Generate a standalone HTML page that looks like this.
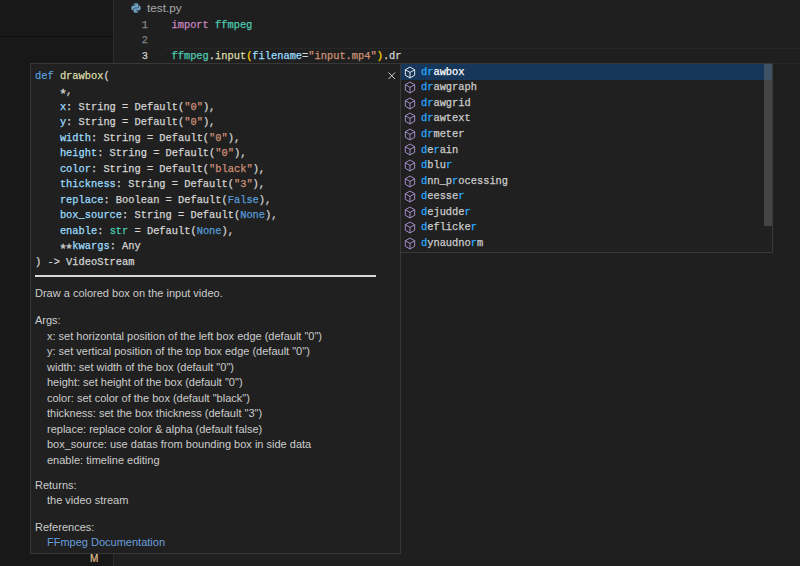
<!DOCTYPE html>
<html><head><meta charset="utf-8">
<style>
html,body{margin:0;padding:0;}
body{width:800px;height:566px;overflow:hidden;background:#1f1f1f;position:relative;font-family:"Liberation Sans",sans-serif;}
.abs{position:absolute;}
.ast{font-style:normal;display:inline-block;transform:translateY(3.3px) scale(1.3);}
.mono{font-family:"Liberation Mono",monospace;font-size:10.37px;line-height:15.4px;white-space:pre;-webkit-text-stroke:0.25px currentColor;}
.sans{font-family:"Liberation Sans",sans-serif;font-size:11px;line-height:15.5px;white-space:pre;color:#cccccc;}
#side{left:0;top:0;width:113px;height:566px;background:#181818;}
#sideline{left:0;top:36px;width:113px;height:1px;background:#0f0f0f;}
#sideborder{left:113px;top:0;width:1px;height:566px;background:#2b2b2b;}
.ln{left:114px;width:34px;text-align:right;color:#858585;}
.code{left:171.5px;color:#d4d4d4;}
.kw{color:#c586c0}.mod{color:#4ec9b0}.fn{color:#dcdcaa}.br{color:#ffd700}.par{color:#9cdcfe}.str{color:#ce9178}.blue{color:#569cd6}.op{color:#d4d4d4}
#curline{left:165px;top:48px;width:635px;height:14px;border-top:1px solid #272727;border-bottom:1px solid #272727;}
#hover{left:30px;top:63px;width:369px;height:489px;background:#202020;border:1px solid #383838;}
#suggest{left:400px;top:63px;width:371px;height:188px;background:#202020;border:1px solid #383838;}
.srow{position:absolute;left:0;width:371px;height:15.6px;}
.srow .lbl{position:absolute;left:20px;top:0.7px;color:#cccccc;-webkit-text-stroke:0.25px currentColor;font-family:"Liberation Mono",monospace;font-size:10.37px;line-height:15.5px;white-space:pre;}
.srow .lbl b{font-weight:normal;color:#2aaaff;}
.srow svg{position:absolute;left:2.8px;top:1.6px;}
.sel{background:#16375a;}
.sel .lbl{color:#ffffff;}
</style></head><body>
<div id="side" class="abs"></div>
<div id="sideline" class="abs"></div>
<div id="sideborder" class="abs"></div>

<!-- breadcrumb -->
<svg class="abs" style="left:131px;top:2.5px" width="10" height="10" viewBox="0 0 16 16">
<path fill="#6ea3c6" d="M7.9 0.5C4.2 0.5 4.4 2.1 4.4 2.1v1.7h3.6v0.5H3C3 4.3 0.6 4 0.6 7.9s2.1 3.7 2.1 3.7h1.3V9.8s-0.1-2.1 2.1-2.1h3.6s2 0 2-2V2.5S12 0.5 7.9 0.5zM5.9 1.7c0.4 0 0.6 0.3 0.6 0.6s-0.3 0.6-0.6 0.6-0.6-0.3-0.6-0.6 0.3-0.6 0.6-0.6z"/>
<path fill="#6ea3c6" d="M8.1 15.5c3.7 0 3.5-1.6 3.5-1.6v-1.7H8v-0.5h5c0 0 2.4 0.3 2.4-3.6s-2.1-3.7-2.1-3.7h-1.3v1.8s0.1 2.1-2.1 2.1H6.3s-2 0-2 2v3.2S4 15.5 8.1 15.5zM10.1 14.3c-0.4 0-0.6-0.3-0.6-0.6s0.3-0.6 0.6-0.6 0.6 0.3 0.6 0.6-0.3 0.6-0.6 0.6z"/>
</svg>
<div class="abs sans" style="left:147px;top:0.5px;font-size:11.8px;line-height:15px;color:#a9a9a9">test.py</div>

<!-- line numbers -->
<div class="abs mono ln" style="top:17.7px;line-height:15.6px">1</div>
<div class="abs mono ln" style="top:33.3px;line-height:15.6px">2</div>
<div class="abs mono ln" style="top:48.9px;line-height:15.6px;color:#cccccc">3</div>
<div id="curline" class="abs"></div>
<div class="abs mono code" style="top:17.7px;line-height:15.6px"><span class="kw">import</span> <span class="mod">ffmpeg</span></div>
<div class="abs mono code" style="top:48.9px;line-height:15.6px"><span class="mod">ffmpeg</span>.<span class="fn">input</span><span class="br">(</span><span class="par">filename</span>=<span class="str">"input.mp4"</span><span class="br">)</span>.dr</div>

<!-- hover -->
<div id="hover" class="abs"></div>
<svg class="abs" style="left:387.5px;top:71.7px" width="8" height="8" viewBox="0 0 8 8"><path d="M0.5 0.5L7.0 7.0M7.0 0.5L0.5 7.0" stroke="#d0d0d0" stroke-width="1"/></svg>
<div class="abs mono" style="left:35px;top:68.8px;line-height:15.5px;color:#d4d4d4"><span class="blue">def</span> <span class="fn">drawbox</span>(
    <i class="ast">*</i>,
    <span class="par">x</span>: String = Default(<span class="str">"0"</span>),
    <span class="par">y</span>: String = Default(<span class="str">"0"</span>),
    <span class="par">width</span>: String = Default(<span class="str">"0"</span>),
    <span class="par">height</span>: String = Default(<span class="str">"0"</span>),
    <span class="par">color</span>: String = Default(<span class="str">"black"</span>),
    <span class="par">thickness</span>: String = Default(<span class="str">"3"</span>),
    <span class="par">replace</span>: Boolean = Default(<span class="blue">False</span>),
    <span class="par">box_source</span>: String = Default(<span class="blue">None</span>),
    <span class="par">enable</span>: <span class="mod">str</span> = Default(<span class="blue">None</span>),
    <i class="ast">*</i><i class="ast">*</i><span class="par">kwargs</span>: Any
) -&gt; VideoStream</div>
<div class="abs" style="left:35px;top:275px;width:341px;height:1.7px;background:#d8d8d8"></div>

<div class="abs sans" style="left:35px;top:286.4px">Draw a colored box on the input video.</div>
<div class="abs sans" style="left:35px;top:313.2px">Args:</div>
<div class="abs sans" style="left:47px;top:328.5px">x: set horizontal position of the left box edge (default "0")
y: set vertical position of the top box edge (default "0")
width: set width of the box (default "0")
height: set height of the box (default "0")
color: set color of the box (default "black")
thickness: set the box thickness (default "3")
replace: replace color &amp; alpha (default false)
box_source: use datas from bounding box in side data
enable: timeline editing</div>
<div class="abs sans" style="left:35px;top:477.7px">Returns:</div>
<div class="abs sans" style="left:47px;top:493.3px">the video stream</div>
<div class="abs sans" style="left:35px;top:519.7px">References:</div>
<div class="abs sans" style="left:47px;top:535.3px;color:#6a9fdc">FFmpeg Documentation</div>

<div class="abs" style="left:90px;top:551.5px;font-size:10px;line-height:14px;color:#e2c08d;font-family:'Liberation Sans',sans-serif;-webkit-text-stroke:0.2px #e2c08d">M</div>

<!-- suggest -->
<div id="suggest" class="abs">
<!--ROWS--><div class="srow sel" style="top:0.00px"><svg width="12" height="13" viewBox="0 0 16 17"><path d="M8 1.2L14.2 4.8V12.2L8 15.8L1.8 12.2V4.8Z M1.8 4.8L8 8.4L14.2 4.8 M8 8.4V15.8" fill="none" stroke="#ffffff" stroke-width="1.15" stroke-linejoin="round"/></svg><span class="lbl"><b>d</b><b>r</b>awbox</span></div>
<div class="srow" style="top:15.58px"><svg width="12" height="13" viewBox="0 0 16 17"><path d="M8 1.2L14.2 4.8V12.2L8 15.8L1.8 12.2V4.8Z M1.8 4.8L8 8.4L14.2 4.8 M8 8.4V15.8" fill="none" stroke="#b39ddf" stroke-width="1.15" stroke-linejoin="round"/></svg><span class="lbl"><b>d</b><b>r</b>awgraph</span></div>
<div class="srow" style="top:31.16px"><svg width="12" height="13" viewBox="0 0 16 17"><path d="M8 1.2L14.2 4.8V12.2L8 15.8L1.8 12.2V4.8Z M1.8 4.8L8 8.4L14.2 4.8 M8 8.4V15.8" fill="none" stroke="#b39ddf" stroke-width="1.15" stroke-linejoin="round"/></svg><span class="lbl"><b>d</b><b>r</b>awgrid</span></div>
<div class="srow" style="top:46.74px"><svg width="12" height="13" viewBox="0 0 16 17"><path d="M8 1.2L14.2 4.8V12.2L8 15.8L1.8 12.2V4.8Z M1.8 4.8L8 8.4L14.2 4.8 M8 8.4V15.8" fill="none" stroke="#b39ddf" stroke-width="1.15" stroke-linejoin="round"/></svg><span class="lbl"><b>d</b><b>r</b>awtext</span></div>
<div class="srow" style="top:62.32px"><svg width="12" height="13" viewBox="0 0 16 17"><path d="M8 1.2L14.2 4.8V12.2L8 15.8L1.8 12.2V4.8Z M1.8 4.8L8 8.4L14.2 4.8 M8 8.4V15.8" fill="none" stroke="#b39ddf" stroke-width="1.15" stroke-linejoin="round"/></svg><span class="lbl"><b>d</b><b>r</b>meter</span></div>
<div class="srow" style="top:77.90px"><svg width="12" height="13" viewBox="0 0 16 17"><path d="M8 1.2L14.2 4.8V12.2L8 15.8L1.8 12.2V4.8Z M1.8 4.8L8 8.4L14.2 4.8 M8 8.4V15.8" fill="none" stroke="#b39ddf" stroke-width="1.15" stroke-linejoin="round"/></svg><span class="lbl"><b>d</b>e<b>r</b>ain</span></div>
<div class="srow" style="top:93.48px"><svg width="12" height="13" viewBox="0 0 16 17"><path d="M8 1.2L14.2 4.8V12.2L8 15.8L1.8 12.2V4.8Z M1.8 4.8L8 8.4L14.2 4.8 M8 8.4V15.8" fill="none" stroke="#b39ddf" stroke-width="1.15" stroke-linejoin="round"/></svg><span class="lbl"><b>d</b>blu<b>r</b></span></div>
<div class="srow" style="top:109.06px"><svg width="12" height="13" viewBox="0 0 16 17"><path d="M8 1.2L14.2 4.8V12.2L8 15.8L1.8 12.2V4.8Z M1.8 4.8L8 8.4L14.2 4.8 M8 8.4V15.8" fill="none" stroke="#b39ddf" stroke-width="1.15" stroke-linejoin="round"/></svg><span class="lbl"><b>d</b>nn_p<b>r</b>ocessing</span></div>
<div class="srow" style="top:124.64px"><svg width="12" height="13" viewBox="0 0 16 17"><path d="M8 1.2L14.2 4.8V12.2L8 15.8L1.8 12.2V4.8Z M1.8 4.8L8 8.4L14.2 4.8 M8 8.4V15.8" fill="none" stroke="#b39ddf" stroke-width="1.15" stroke-linejoin="round"/></svg><span class="lbl"><b>d</b>eesse<b>r</b></span></div>
<div class="srow" style="top:140.22px"><svg width="12" height="13" viewBox="0 0 16 17"><path d="M8 1.2L14.2 4.8V12.2L8 15.8L1.8 12.2V4.8Z M1.8 4.8L8 8.4L14.2 4.8 M8 8.4V15.8" fill="none" stroke="#b39ddf" stroke-width="1.15" stroke-linejoin="round"/></svg><span class="lbl"><b>d</b>ejudde<b>r</b></span></div>
<div class="srow" style="top:155.80px"><svg width="12" height="13" viewBox="0 0 16 17"><path d="M8 1.2L14.2 4.8V12.2L8 15.8L1.8 12.2V4.8Z M1.8 4.8L8 8.4L14.2 4.8 M8 8.4V15.8" fill="none" stroke="#b39ddf" stroke-width="1.15" stroke-linejoin="round"/></svg><span class="lbl"><b>d</b>eflicke<b>r</b></span></div>
<div class="srow" style="top:171.38px"><svg width="12" height="13" viewBox="0 0 16 17"><path d="M8 1.2L14.2 4.8V12.2L8 15.8L1.8 12.2V4.8Z M1.8 4.8L8 8.4L14.2 4.8 M8 8.4V15.8" fill="none" stroke="#b39ddf" stroke-width="1.15" stroke-linejoin="round"/></svg><span class="lbl"><b>d</b>ynaudno<b>r</b>m</span></div><!--/ROWS-->
<div class="abs" style="left:363px;top:0;width:8px;height:162px;background:rgba(121,121,121,0.42)"></div>
</div>
</body></html>
